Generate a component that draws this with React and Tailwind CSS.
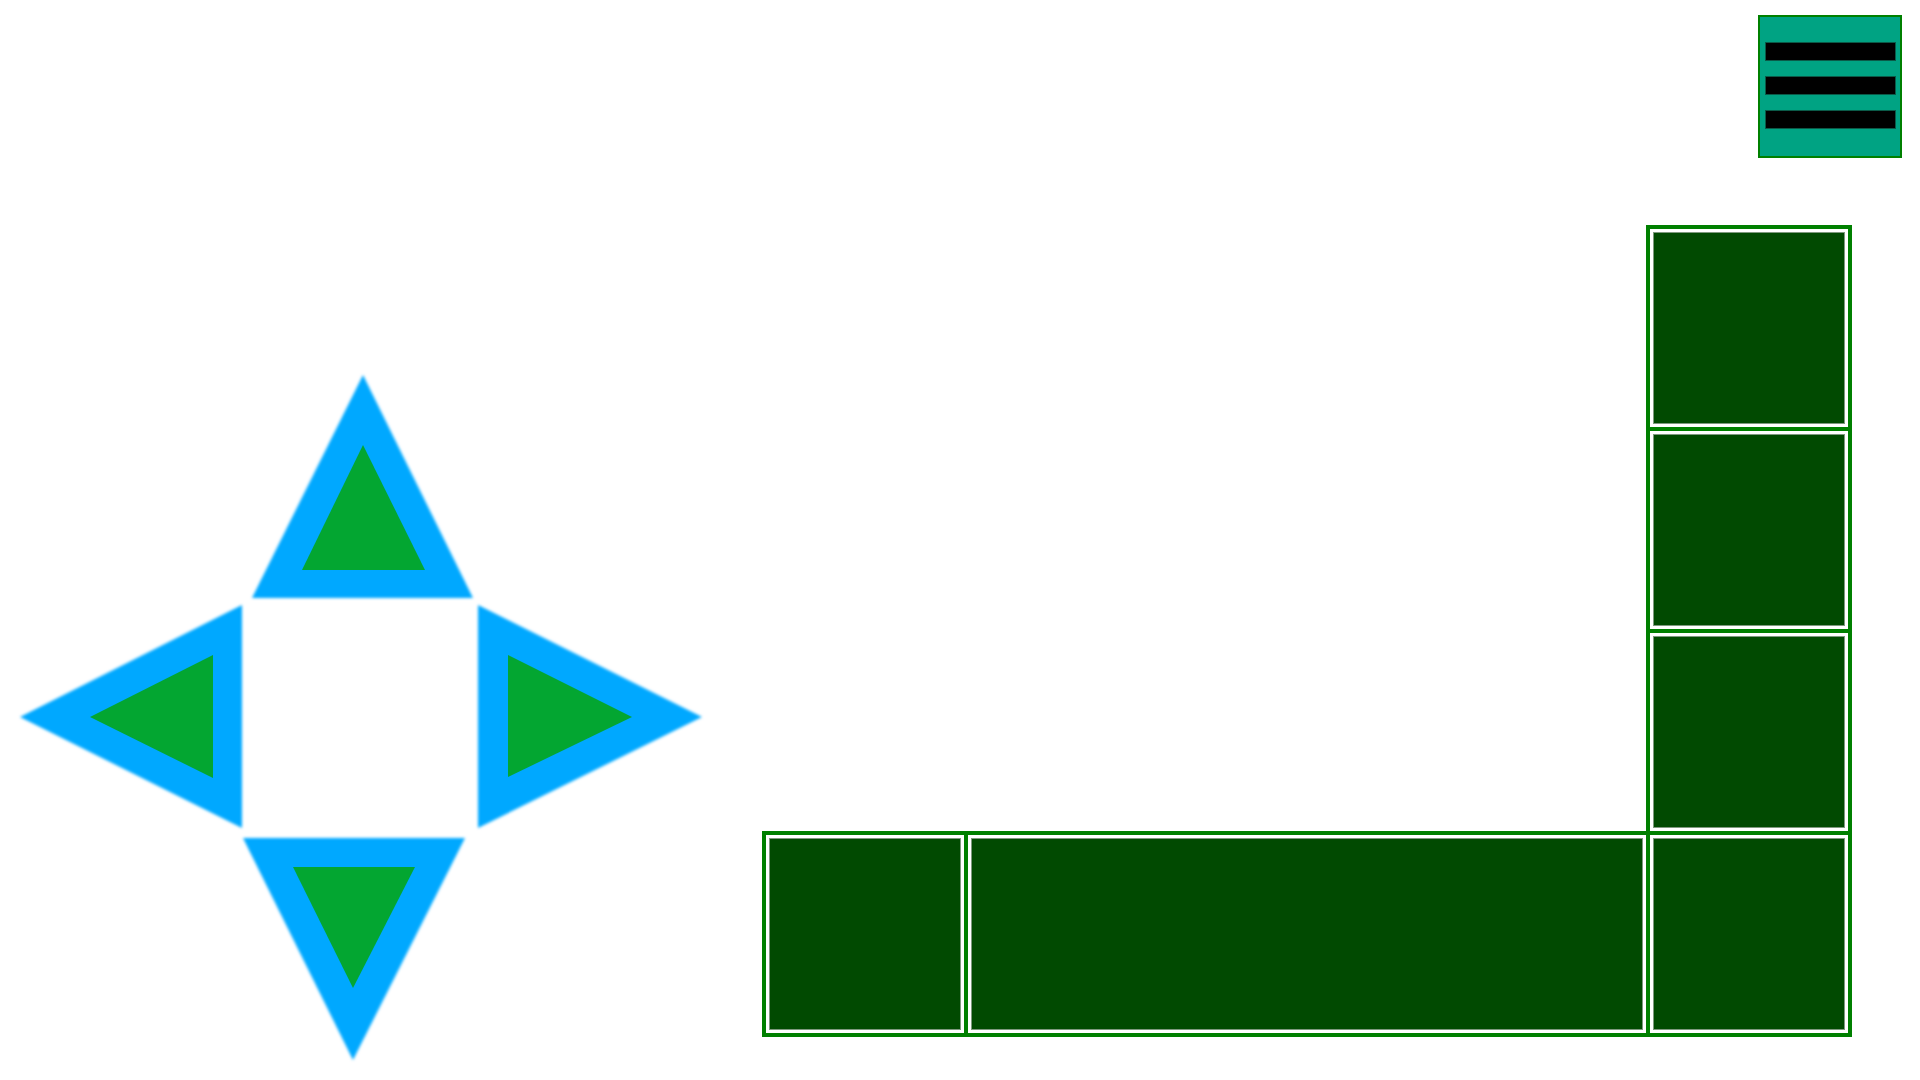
// Game screen: d-pad on the left, board cells on the right, menu button on top
function MenuButton() {
    return (
        <button className="w-[144px] h-[143px] bg-[#00a383] border-2 border-[#008000] flex flex-col gap-[15px] pt-[25px] pl-[5px]">
            <span className="block w-[131px] h-[19px] bg-black border border-[#0b5a48]" />
            <span className="block w-[131px] h-[19px] bg-black border border-[#0b5a48]" />
            <span className="block w-[131px] h-[19px] bg-black border border-[#0b5a48]" />
        </button>
    )
}

function Cell({ className = '', wide = false }) {
    return (
        <div className={`${wide ? 'w-[686px]' : 'w-[206px]'} h-[206px] shrink-0 border-4 border-[#008000] bg-white p-[3px] ${className}`}>
            <div className="w-full h-full bg-[#014a01] border border-[#7f997f]" />
        </div>
    )
}

function DPad() {
    const arrows = [
        { outer: '363,375 473,598 252,598', inner: '363,445 425,570 302,570' },
        { outer: '20,717 242,605 242,828', inner: '90,717 213,655 213,778' },
        { outer: '478,605 702,717 478,828', inner: '508,655 632,717 508,777' },
        { outer: '243,838 465,838 353,1060', inner: '293,867 415,867 353,988' },
    ]
    return (
        <svg width="720" height="720" viewBox="0 360 720 720" className="shrink-0 mt-[202px]">
            <defs>
                <filter id="soft" x="-10%" y="-10%" width="120%" height="120%">
                    <feGaussianBlur stdDeviation="1.8" />
                </filter>
            </defs>
            {arrows.map((a, i) => (
                <g key={i}>
                    <polygon points={a.outer} fill="#00a8ff" filter="url(#soft)" />
                    <polygon points={a.inner} fill="#03a631" />
                </g>
            ))}
        </svg>
    )
}

export default function App() {
    return (
        <div className="w-[1920px] h-[1080px] overflow-hidden bg-white">

            {/* Header */}
            <div className="flex justify-end pt-[15px] pr-[18px]">
                <MenuButton />
            </div>

            {/* Body */}
            <div className="flex items-start">
                <DPad />

                {/* Board */}
                <div className="ml-[42px] mt-[67px] w-[1090px] flex flex-col items-end">
                    <Cell />
                    <Cell className="-mt-1" />
                    <Cell className="-mt-1" />
                    <div className="flex -mt-1">
                        <Cell />
                        <Cell wide className="-ml-1" />
                        <Cell className="-ml-1" />
                    </div>
                </div>
            </div>

        </div>
    )
}
